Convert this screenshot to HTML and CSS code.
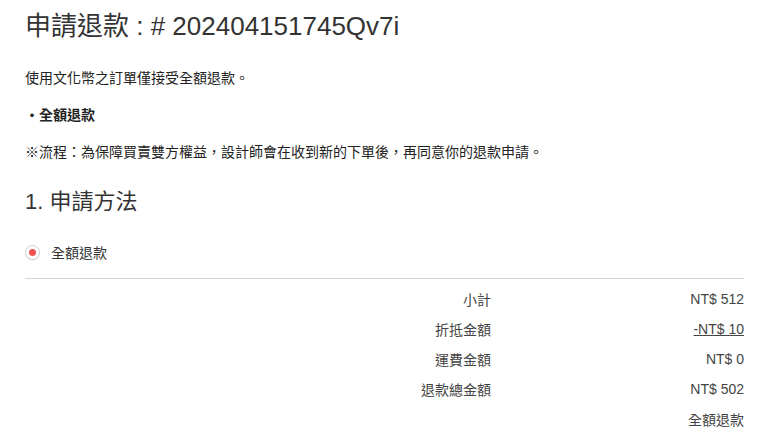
FILE: index.html
```html
<!DOCTYPE html>
<html lang="zh-Hant">
<head>
<meta charset="utf-8">
<link rel="stylesheet" href="styles.css">
</head>
<body>
<div class="page">
  <h1 class="title">申請退款 : # 202404151745Qv7i</h1>
  <p class="note">使用文化幣之訂單僅接受全額退款。</p>
  <p class="note bold">・全額退款</p>
  <p class="note">※流程：為保障買賣雙方權益，設計師會在收到新的下單後，再同意你的退款申請。</p>
  <h2 class="section">1. 申請方法</h2>
  <label class="radio-row">
    <span class="radio"><span class="dot"></span></span>
    <span class="radio-label">全額退款</span>
  </label>
  <div class="summary">
    <div class="row"><span class="label">小計</span><span class="value">NT$ 512</span></div>
    <div class="row"><span class="label">折抵金額</span><span class="value discount">-NT$ 10</span></div>
    <div class="row"><span class="label">運費金額</span><span class="value">NT$ 0</span></div>
    <div class="row"><span class="label">退款總金額</span><span class="value">NT$ 502</span></div>
    <div class="row"><span class="label"></span><span class="value">全額退款</span></div>
  </div>
</div>
</body>
</html>
```
FILE: styles.css
```css
* { box-sizing: border-box; }
html, body { margin: 0; padding: 0; background: #fff; }
body {
  font-family: "Liberation Sans", "Noto Sans CJK TC", sans-serif;
  color: #333;
}
.page { padding: 11px 15px 0 25px; }
.title {
  margin: 0;
  font-size: 26px;
  font-weight: 400;
  line-height: 30px;
  color: #333;
}
.note {
  margin: 0;
  font-size: 14px;
  line-height: 20px;
  color: #222;
}
.title + .note { margin-top: 27px; }
.note + .note { margin-top: 17px; }
.bold { font-weight: 700; }
.section {
  margin: 26px 0 0;
  font-size: 22px;
  font-weight: 400;
  line-height: 28px;
  color: #333;
}
.radio-row {
  display: flex;
  align-items: center;
  gap: 11px;
  margin-top: 25px;
  height: 22px;
}
.radio {
  width: 15px; height: 15px;
  border: 1px solid #ccc;
  border-radius: 50%;
  display: flex; align-items: center; justify-content: center;
  box-shadow: 0 1px 1px rgba(0,0,0,0.05);
}
.dot { width: 7px; height: 7px; border-radius: 50%; background: #ef5350; }
.radio-label { font-size: 14px; color: #333; }
.summary {
  margin-top: 15px;
  border-top: 1px solid #d4d4d4;
  padding-top: 5px;
}
.row {
  display: grid;
  grid-template-columns: 1fr 253px;
  height: 30px;
  align-items: center;
  font-size: 14px;
  color: #444;
}
.label { text-align: right; }
.value { text-align: right; }
.discount { text-decoration: underline; }
```
